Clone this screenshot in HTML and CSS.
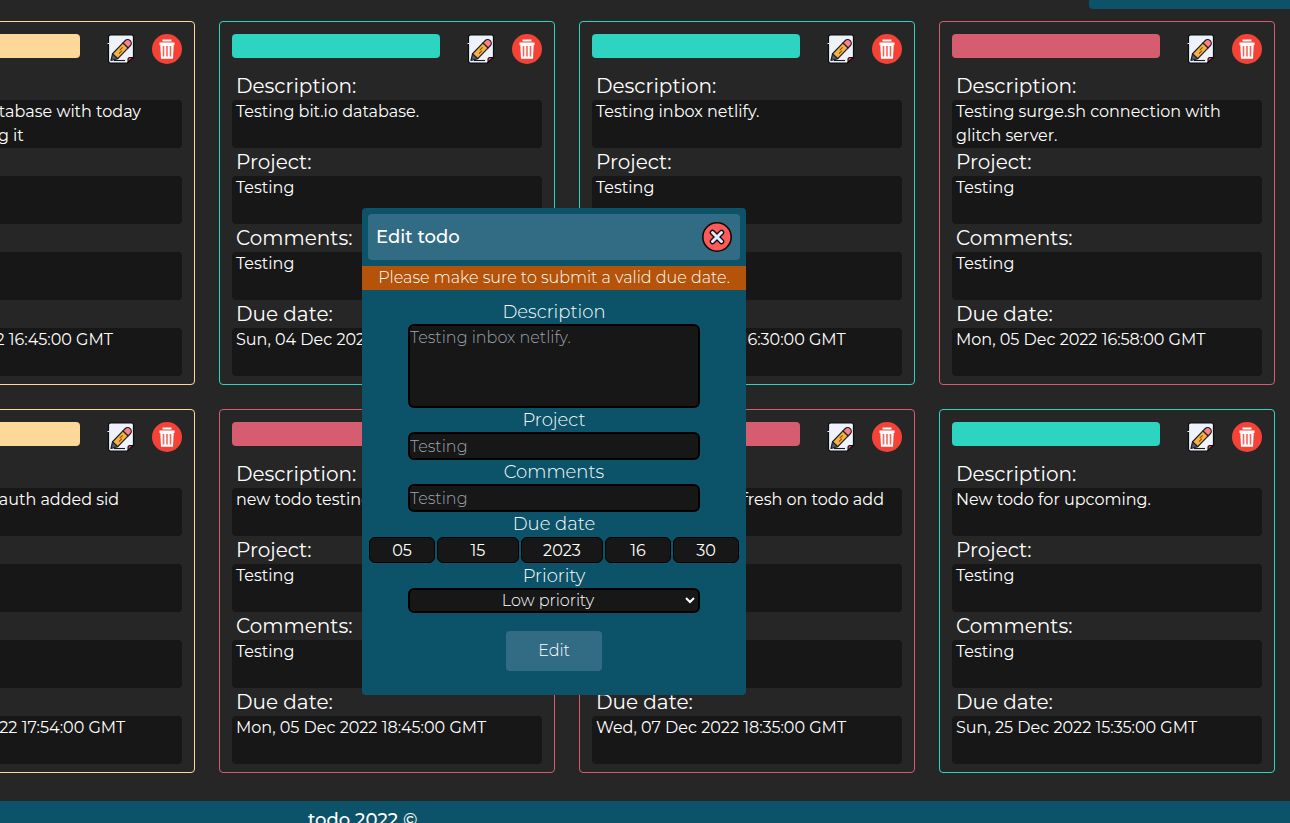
FILE: index.html
```html
<!DOCTYPE html>
<html lang="en">
<head>
<meta charset="utf-8">
<title>todo</title>
<link rel="stylesheet" href="styles.css">
</head>
<body>
<svg class="sprite" aria-hidden="true">
  <symbol id="icon-edit" viewBox="0 0 30 30">
    <path d="M4.500 1h21a2 2 0 0 1 2 2v20l-6 6h-17a2 2 0 0 1-2-2V3a2 2 0 0 1 2-2z" fill="#edf2fb" stroke="#0c0c0c" stroke-width="1.200"/>
    <path d="M22 28.500v-3a2 2 0 0 1 2-2h3.300z" fill="#d9434f" stroke="#0c0c0c" stroke-width="1.100"/>
    <path d="M1.500 9.500h2" stroke="#edf2fb"/>
    <path d="M8 26.500h11" stroke="#16161c" stroke-width="1.100"/>
    <g transform="translate(5 26.500) rotate(-46)" stroke="#1c1c24" stroke-width="1.200" stroke-linejoin="round">
      <path d="M0 0l6-3.600v7.200z" fill="#555b70"/>
      <path d="M6-3.600h15v7.200H6z" fill="#f9b03c"/>
      <path d="M21-3.600h3a3.600 3.600 0 0 1 0 7.200h-3z" fill="#fb8088"/>
      <path d="M10.500 1h4M13.500-.8h4" stroke="#6b4a1c" stroke-width="1"/>
    </g>
  </symbol>
  <symbol id="icon-trash" viewBox="0 0 30 30">
    <circle cx="15" cy="15" r="15" fill="#f44336"/>
    <path d="M10.500 5.500h9v2h-9z" fill="#fff"/>
    <path d="M7.500 8.500h15v2.500h-.8l-.7 13.800H9L8.300 11h-.8z" fill="#fff"/>
    <path d="M11.500 12v10.500M15 12v10.500M18.500 12v10.500" stroke="#f4685e" stroke-width="1.600"/>
  </symbol>
  <symbol id="icon-close" viewBox="0 0 30 30">
    <circle cx="15" cy="15" r="14.200" fill="#ff5a5a" stroke="#0b0b0b" stroke-width="1.600"/>
    <path d="M10.500 10.500l9 9m0-9l-9 9" stroke="#0b0b0b" stroke-width="5.600" stroke-linecap="round"/>
    <path d="M10.500 10.500l9 9m0-9l-9 9" stroke="#e4eaf8" stroke-width="3" stroke-linecap="round"/>
  </symbol>
</svg>

<header class="top"><div class="top-menu"></div></header>

<main class="board" id="board"></main>

<footer class="footer"><p>todo 2022 ©</p></footer>

<form class="modal" role="dialog" aria-labelledby="modal-title">
  <div class="modal-head">
    <h2 id="modal-title">Edit todo</h2>
    <button type="button" class="icon-btn" aria-label="Close"><svg class="icon"><use href="#icon-close"/></svg></button>
  </div>
  <p class="alert" role="alert">Please make sure to submit a valid due date.</p>
  <div class="fields">
    <label for="description">Description</label>
    <textarea class="control area" id="description" placeholder="Testing inbox netlify."></textarea>
    <label for="project">Project</label>
    <input class="control" id="project" type="text" placeholder="Testing">
    <label for="comments">Comments</label>
    <input class="control" id="comments" type="text" placeholder="Testing">
    <label for="month">Due date</label>
    <div class="date-row">
      <input class="part" id="month" value="05" aria-label="Month">
      <input class="part wide" value="15" aria-label="Day">
      <input class="part wide" value="2023" aria-label="Year">
      <input class="part" value="16" aria-label="Hour">
      <input class="part" value="30" aria-label="Minute">
    </div>
    <label for="priority">Priority</label>
    <select class="control select" id="priority">
      <option>Low priority</option>
      <option>Medium priority</option>
      <option>High priority</option>
    </select>
    <button type="button" class="submit">Edit</button>
  </div>
</form>
<script src="board.js"></script>
</body>
</html>
```
FILE: board.js
```js
const todos = [
  ["medium", "Testing bitio database with today date and adding it", "Sun, 11 Dec 2022 16:45:00 GMT"],
  ["low", "Testing bit.io database.", "Sun, 04 Dec 2022 16:55:00 GMT"],
  ["low", "Testing inbox netlify.", "Mon, 05 Dec 2022 16:30:00 GMT"],
  ["high", "Testing surge.sh connection with glitch server.", "Mon, 05 Dec 2022 16:58:00 GMT"],
  ["medium", "Testing google auth added sid", "Mon, 05 Dec 2022 17:54:00 GMT"],
  ["high", "new todo testing", "Mon, 05 Dec 2022 18:45:00 GMT"],
  ["high", "Testing the side refresh on todo add", "Wed, 07 Dec 2022 18:35:00 GMT"],
  ["low", "New todo for upcoming.", "Sun, 25 Dec 2022 15:35:00 GMT"]
];
const field = (name, text) => `<dt>${name}:</dt><dd>${text}</dd>`;
document.getElementById("board").innerHTML = todos.map(([level, text, due]) => `
<article class="card ${level}">
  <div class="card-head">
    <div class="bar"></div>
    <div class="actions">
      <button class="icon-btn" aria-label="Edit"><svg class="icon"><use href="#icon-edit"/></svg></button>
      <button class="icon-btn" aria-label="Delete"><svg class="icon"><use href="#icon-trash"/></svg></button>
    </div>
  </div>
  <dl>${field("Description", text)}${field("Project", "Testing")}${field("Comments", "Testing")}${field("Due date", due)}</dl>
</article>`).join("");
```
FILE: styles.css
```css
* { box-sizing: border-box; margin: 0; }

body {
  min-height: 100vh;
  overflow: hidden;
  background: #262626;
  color: #fff;
  font: 300 16px/24px Montserrat, Inter, sans-serif;
}

button, input, textarea, select { font: inherit; color: inherit; }

.sprite { position: absolute; width: 0; height: 0; }

.icon { display: block; width: 30px; height: 30px; }

.icon-btn { padding: 0; border: 0; background: none; cursor: pointer; }

.top { display: flex; justify-content: flex-end; }

.top-menu {
  width: 201px;
  height: 9px;
  background: #0c5369;
  border-bottom-left-radius: 4px;
}

.board {
  display: grid;
  grid-template-columns: repeat(4, 336px);
  justify-content: end;
  gap: 24px;
  padding: 12px 15px 28px;
}

.card {
  --level: #2dd4bf;
  padding: 12px 12px 8px;
  border: 1px solid var(--level);
  border-radius: 4px;
}

.card.medium { --level: #fed898; }
.card.high { --level: #d55d6f; }

.card-head {
  display: flex;
  justify-content: space-between;
  align-items: flex-start;
  height: 38px;
}

.bar { width: 208px; height: 24px; border-radius: 4px; background: var(--level); }

.actions { display: flex; gap: 16px; }

.card dt { padding-left: 4px; font-size: 20px; font-weight: 400; line-height: 28px; }

.card dd {
  min-height: 48px;
  padding: 0 4px;
  border-radius: 4px;
  background: #171717;
  font-weight: 400;
}

.footer { padding: 5px 308px; background: #0c5369; font-size: 18px; font-weight: 500; line-height: 28px; }

.modal {
  position: absolute;
  top: 208px;
  left: 362px;
  width: 384px;
  padding-bottom: 24px;
  border-radius: 4px;
  background: #0c5369;
}

.modal-head {
  display: flex;
  justify-content: space-between;
  align-items: center;
  margin: 6px;
  padding: 8px;
  border-radius: 4px;
  background: #326b84;
}

.modal-head h2 { font-size: 18px; font-weight: 500; line-height: 28px; }

.alert { background: #b45309; text-align: center; white-space: nowrap; }

.fields { display: flex; flex-direction: column; align-items: center; padding-top: 10px; }

.fields label { font-size: 18px; line-height: 24px; }

.control {
  width: 292px;
  height: 28px;
  padding: 0;
  border: 2px solid #000;
  border-radius: 6px;
  background: #171717;
}

.area { height: 84px; resize: none; }

.control::placeholder { color: #9ca3af; opacity: 1; }

.date-row { display: flex; align-items: center; gap: 2px; height: 28px; }

.part {
  width: 66px;
  height: 26px;
  padding: 0;
  border: 1px solid #000;
  border-radius: 6px;
  background: #171717;
  font-weight: 400;
  text-align: center;
}

.wide { width: 82px; }

.select { height: 25px; text-align: center; }

.submit {
  width: 96px;
  height: 40px;
  margin-top: 18px;
  border: 0;
  border-radius: 4px;
  background: #326b84;
}
```
